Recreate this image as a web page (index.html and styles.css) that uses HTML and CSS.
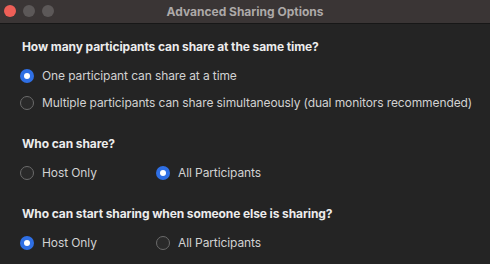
FILE: index.html
```html
<!DOCTYPE html>
<html lang="en">
<head>
    <meta charset="UTF-8">
    <meta name="viewport" content="width=device-width, initial-scale=1.0">
    <title>Advanced Sharing Options</title>
    <link rel="stylesheet" href="styles.css">
</head>
<body>
    <div class="window">
        <div class="titlebar">
            <div class="lights">
                <span class="light close"></span>
                <span class="light"></span>
                <span class="light"></span>
            </div>
            <div class="title">Advanced Sharing Options</div>
        </div>

        <div class="content">
            <div class="section">
                <h3>How many participants can share at the same time?</h3>
                <div class="row">
                    <label class="option"><span class="radio checked"></span>One participant can share at a time</label>
                </div>
                <div class="row">
                    <label class="option"><span class="radio"></span>Multiple participants can share simultaneously (dual monitors recommended)</label>
                </div>
            </div>

            <div class="section">
                <h3>Who can share?</h3>
                <div class="row">
                    <label class="option first"><span class="radio"></span>Host Only</label>
                    <label class="option"><span class="radio checked"></span>All Participants</label>
                </div>
            </div>

            <div class="section">
                <h3>Who can start sharing when someone else is sharing?</h3>
                <div class="row">
                    <label class="option first"><span class="radio checked"></span>Host Only</label>
                    <label class="option"><span class="radio"></span>All Participants</label>
                </div>
            </div>
        </div>
    </div>
</body>
</html>
```

FILE: styles.css
```css
body {
    margin: 0;
    background-color: #242424;
    font-family: Inter, "Noto Sans", sans-serif;
    color: #d2d2d2;
}
.window {
    width: 490px;
    height: 264px;
    overflow: hidden;
}
.titlebar {
    height: 23px;
    background-color: #3a3535;
    border-bottom: 1px solid #171717;
    display: flex;
    align-items: center;
    justify-content: center;
    position: relative;
}
.lights {
    position: absolute;
    left: 4px;
    top: 5px;
    display: flex;
    gap: 7px;
}
.light {
    width: 12px;
    height: 12px;
    border-radius: 50%;
    background-color: #5c5858;
}
.light.close { background-color: #ee5f57; }
.title {
    font-size: 12px;
    font-weight: 700;
    color: #ada9a8;
}
.content {
    padding: 15px 20px 0;
}
.section { margin-bottom: 20px; }
h3 {
    margin: 0 0 7px 2px;
    height: 16px;
    line-height: 16px;
    font-size: 12px;
    font-weight: 700;
    letter-spacing: -0.1px;
    color: #ececec;
    white-space: nowrap;
}
.row {
    height: 27px;
    display: flex;
    align-items: center;
}
.option {
    display: flex;
    align-items: center;
    gap: 8px;
    font-size: 12px;
    letter-spacing: -0.1px;
    white-space: nowrap;
}
.option.first { width: 136px; }
.radio {
    flex: none;
    width: 14px;
    height: 14px;
    box-sizing: border-box;
    border-radius: 50%;
    border: 1px solid #6b6b6b;
    background-color: #2a2a2a;
    display: flex;
    align-items: center;
    justify-content: center;
}
.radio.checked {
    border: none;
    background-color: #2f6fe4;
}
.radio.checked::after {
    content: "";
    width: 6px;
    height: 6px;
    border-radius: 50%;
    background-color: white;
}
```
